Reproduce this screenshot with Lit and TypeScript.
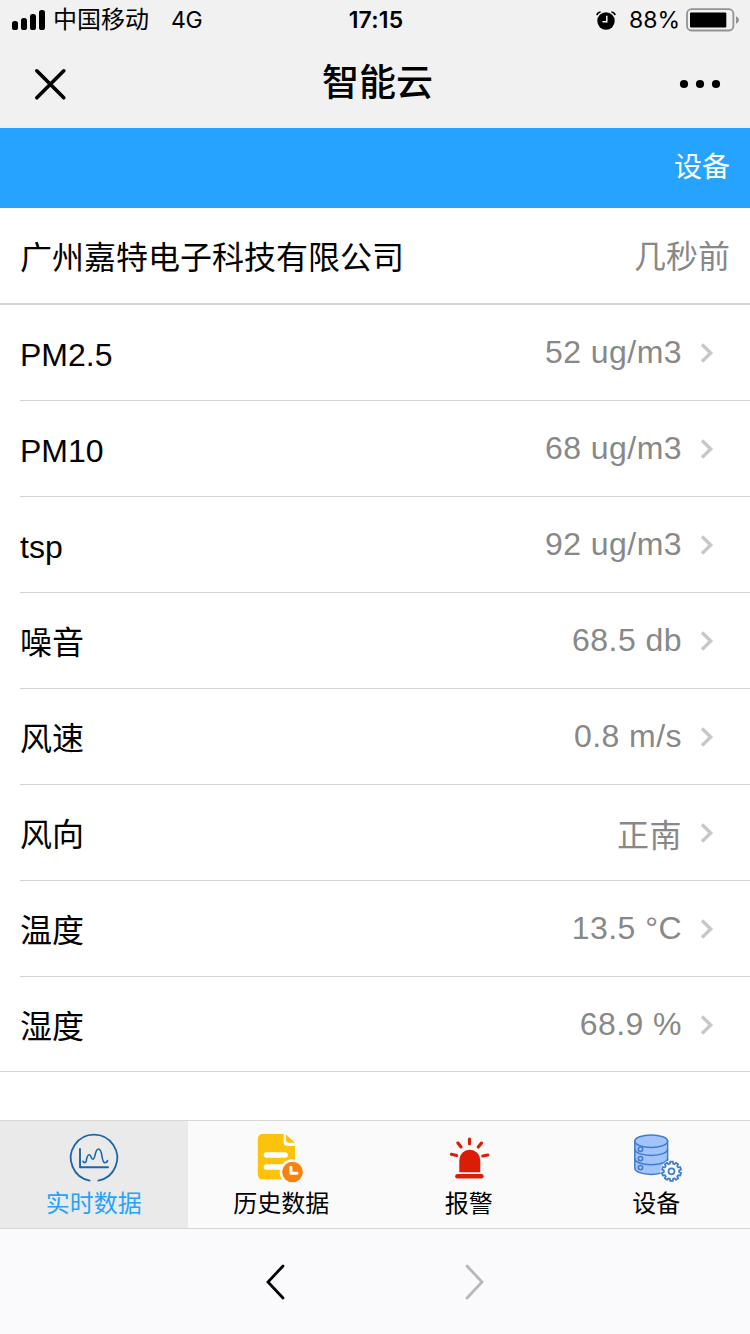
import { LitElement, html, css, svg } from "lit";
import { customElement, property } from "lit/decorators.js";
import { classMap } from "lit/directives/class-map.js";

const readings = [
  { name: "PM2.5", value: "52 ug/m3" },
  { name: "PM10", value: "68 ug/m3" },
  { name: "tsp", value: "92 ug/m3" },
  { name: "噪音", value: "68.5 db" },
  { name: "风速", value: "0.8 m/s" },
  { name: "风向", value: "正南" },
  { name: "温度", value: "13.5 °C" },
  { name: "湿度", value: "68.9 %" },
];

const gearPath = (() => {
  const teeth = 10;
  const points: string[] = [];
  for (let i = 0; i < teeth; i++) {
    const base = (i / teeth) * Math.PI * 2 - Math.PI / 2;
    for (const [offset, radius] of [[-0.2, 7.7], [-0.15, 9.7], [0.15, 9.7], [0.2, 7.7]]) {
      const a = base + offset;
      points.push(`${(39.5 + radius * Math.cos(a)).toFixed(2)} ${(39.5 + radius * Math.sin(a)).toFixed(2)}`);
    }
  }
  return `M${points.join("L")}Z`;
})();

const tabIcons = {
  chart: svg`
    <g fill="none" stroke="#1c66a8" stroke-linecap="round" stroke-linejoin="round">
      <path d="M19.7 46.6A23.2 23.2 0 1 1 28.3 46.6" stroke-width="1.8"/>
      <path d="M10 15V33.3H38" stroke-width="1.9"/>
      <path d="M13 27.2C13.2 29 15.6 29.2 16.2 27C17 23 17.2 20.7 19.2 20.7C21.4 20.7 20.8 25.3 22.8 25.3C25.6 25.3 24.6 15 28.6 15C33 15 30.9 28.7 35 28.7C36.5 28.7 37.3 27.7 37.5 26.6" stroke-width="1.6"/>
    </g>`,
  history: svg`
    <path d="M6 0H26.5V7.5Q26.5 12 31 12H38V40Q38 45.5 32.5 45.5H6Q.8 45.5.8 40V5.5Q.8 0 6 0Z" fill="#fdc20b"/>
    <path d="M29 .5L38 8.8H32Q29 8.8 29 6Z" fill="#fdc20b"/>
    <path d="M9.5 21H28M9.5 33H28" stroke="#fff" stroke-width="5.6" stroke-linecap="round"/>
    <circle cx="35.5" cy="38" r="12.8" fill="#fafafa"/>
    <circle cx="35.5" cy="38" r="10.3" fill="#f9820d"/>
    <path d="M33.9 33.3V39.3H40" fill="none" stroke="#fff" stroke-width="3" stroke-linecap="round" stroke-linejoin="round"/>`,
  alarm: svg`
    <path d="M14.3 38.2V26.2A10.5 10.5 0 0 1 35.3 26.2V38.2Z" fill="#db1d08"/>
    <path d="M12.4 42.2H36.4" stroke="#db1d08" stroke-width="4.5" stroke-linecap="round"/>
    <path d="M6.4 20.3L11.6 21.5M12.9 8.9L16 12.9M24.5 5V9.7M36.5 9.1L33.3 13M42.8 21L37.8 22" stroke="#db1d08" stroke-width="3.2" stroke-linecap="round"/>`,
  database: svg`
    <g fill="#a3c4fb" stroke="#3f7ccb" stroke-width="1.5">
      <path d="M2.8 7.2V34.3C2.8 37.8 10 40.4 19.3 40.4S35.6 37.8 35.6 34.3V7.2Z"/>
      <path d="M2.8 15.3C2.8 18.8 10 21.4 19.3 21.4S35.6 18.8 35.6 15.3" fill="none"/>
      <path d="M2.8 24.6C2.8 28.1 10 30.7 19.3 30.7S35.6 28.1 35.6 24.6" fill="none"/>
      <ellipse cx="19.2" cy="7.2" rx="16.4" ry="6.2"/>
      <circle cx="8.5" cy="15.3" r="2.2"/><circle cx="8.5" cy="24.6" r="2.2"/><circle cx="8.5" cy="33.6" r="2.2"/>
    </g>
    <circle cx="39.5" cy="37.3" r="11" fill="#fafafa"/>
    <g transform="translate(0 -2.2)" fill="#fafafa" stroke="#3f7ccb" stroke-width="1.7" stroke-linejoin="round">
      <path d=${gearPath}/><circle cx="39.5" cy="39.5" r="3"/>
    </g>`,
};

const tabs = [
  { label: "实时数据", icon: tabIcons.chart, active: true },
  { label: "历史数据", icon: tabIcons.history, active: false },
  { label: "报警", icon: tabIcons.alarm, active: false },
  { label: "设备", icon: tabIcons.database, active: false },
];

@customElement("status-bar")
class StatusBar extends LitElement {
  static styles = css`
    :host {
      display: grid;
      grid-template-columns: 1fr auto 1fr;
      align-items: center;
      height: 40px;
      padding: 0 10px 0 12px;
      font-family: Inter, "Noto Sans CJK SC", sans-serif;
      font-size: 23px;
      color: #000;
    }
    .side { display: flex; align-items: center; height: 40px; }
    .right { justify-content: flex-end; }
    .signal { margin-right: 7px; }
    .carrier { font-size: 24px; line-height: 40px; }
    .network { margin-left: 22px; line-height: 40px; letter-spacing: -0.4px; }
    .time { font-size: 23px; font-weight: 600; line-height: 40px; letter-spacing: 0.2px; }
    .alarm { margin-right: 13px; }
    .percent { margin-right: 6px; line-height: 40px; letter-spacing: 0; }
    svg { display: block; flex: none; }
  `;
  render() {
    return html`
      <div class="side">
        <svg class="signal" width="34" height="20" viewBox="0 0 34 20">
          <rect x="0" y="11" width="6" height="9" rx="2.6"/>
          <rect x="9" y="8" width="6" height="12" rx="2.6"/>
          <rect x="18" y="4" width="6" height="16" rx="2.6"/>
          <rect x="27" y="0" width="6" height="20" rx="2.6"/>
        </svg>
        <span class="carrier">中国移动</span><span class="network">4G</span>
      </div>
      <div class="time">17:15</div>
      <div class="side right">
        <svg class="alarm" width="20" height="19" viewBox="0 0 20 19">
          <circle cx="10" cy="10" r="8.7"/>
          <path d="M1 4.2Q1.4 1.3 4.6 1M19 4.2Q18.6 1.3 15.4 1" fill="none" stroke="#000" stroke-width="1.7"/>
          <path d="M10.8 4.7V10.8H6.5" fill="none" stroke="#f1f1f1" stroke-width="1.5"/>
        </svg>
        <span class="percent">88%</span>
        <svg width="54" height="24" viewBox="0 0 54 24">
          <rect x="1" y="1.2" width="46.4" height="21.3" rx="4.5" fill="none" stroke="#929292" stroke-width="1.8"/>
          <rect x="4" y="4.5" width="36.3" height="15" rx="1"/>
          <path d="M50 8.3Q53 9.5 53 12T50 15.9Z" fill="#929292"/>
        </svg>
      </div>`;
  }
}

@customElement("reading-row")
class ReadingRow extends LitElement {
  @property() name = "";
  @property() value = "";
  static styles = css`
    :host {
      display: flex;
      justify-content: space-between;
      box-sizing: border-box;
      height: 96px;
      margin-left: 20px;
      padding-right: 36px;
      border-bottom: 1px solid #d4d4d4;
    }
    :host(.last) { height: 95px; margin-left: 0; padding-left: 20px; }
    .name { line-height: 101px; }
    .value { display: flex; align-items: center; gap: 17px; height: 95px; color: #888; letter-spacing: 0.45px; }
    svg { display: block; }
  `;
  render() {
    return html`
      <span class="name">${this.name}</span>
      <span class="value">${this.value}
        <svg width="15" height="20" viewBox="0 0 15 20">
          <path d="M3 1.5L11.7 10L3 18.5" fill="none" stroke="#c7c7cc" stroke-width="3.4"/>
        </svg>
      </span>`;
  }
}

@customElement("app-root")
class AppRoot extends LitElement {
  static styles = css`
    :host {
      display: flex;
      flex-direction: column;
      width: 750px;
      height: 1334px;
      overflow: hidden;
      background: #fff;
      color: #000;
      font-family: "Liberation Sans", "Noto Sans CJK SC", sans-serif;
      font-size: 32px;
    }
    .top { height: 128px; background: #f1f1f1; flex: none; }
    .title-bar {
      display: grid;
      grid-template-columns: 1fr auto 1fr;
      align-items: center;
      height: 88px;
      padding: 0 29px 0 34px;
    }
    .title { font-size: 37px; font-weight: 500; line-height: 88px; }
    .more { justify-self: end; }
    .nav {
      flex: none;
      height: 80px;
      background: #26a2ff;
      color: #fff;
      font-size: 28px;
      line-height: 80px;
      text-align: right;
      padding-right: 20px;
    }
    .company {
      flex: none;
      display: flex;
      justify-content: space-between;
      height: 95px;
      padding: 0 20px;
      border-bottom: 2px solid #d4d4d4;
    }
    .company-name { line-height: 101px; }
    .ago { line-height: 98px; color: #888; }
    .readings { flex: 1; }
    .tabs {
      flex: none;
      display: grid;
      grid-template-columns: repeat(4, 1fr);
      height: 107px;
      border-top: 1px solid #d6d6d6;
      border-bottom: 1px solid #d6d6d6;
      background: #fafafa;
    }
    .tab { display: flex; flex-direction: column; align-items: center; padding-top: 13px; font-size: 24px; }
    .tab.active { background: #eaeaea; color: #26a2ff; }
    .label { line-height: 34px; margin-top: 5px; }
    .browser-bar {
      flex: none;
      display: flex;
      justify-content: center;
      align-items: center;
      gap: 176px;
      height: 105px;
      background: #fafafc;
    }
    svg { display: block; overflow: visible; }
  `;
  render() {
    return html`
      <header class="top">
        <status-bar></status-bar>
        <div class="title-bar">
          <svg width="33" height="33" viewBox="0 0 33 33">
            <path d="M2.8 2.8L29.8 29.8M29.8 2.8L2.8 29.8" stroke="#000" stroke-width="3.6" stroke-linecap="round"/>
          </svg>
          <span class="title">智能云</span>
          <svg class="more" width="42" height="10" viewBox="0 0 42 10">
            <circle cx="5" cy="5" r="4.1"/><circle cx="21" cy="5" r="4.1"/><circle cx="37" cy="5" r="4.1"/>
          </svg>
        </div>
      </header>
      <nav class="nav">设备</nav>
      <section class="company">
        <span class="company-name">广州嘉特电子科技有限公司</span>
        <span class="ago">几秒前</span>
      </section>
      <main class="readings">
        ${readings.map((r, i) => html`
          <reading-row class=${classMap({ last: i === readings.length - 1 })} .name=${r.name} .value=${r.value}></reading-row>`)}
      </main>
      <nav class="tabs">
        ${tabs.map((t) => html`
          <div class=${classMap({ tab: true, active: t.active })}>
            <svg width="48" height="48" viewBox="0 0 48 48">${t.icon}</svg>
            <span class="label">${t.label}</span>
          </div>`)}
      </nav>
      <footer class="browser-bar">
        <svg width="22" height="36" viewBox="0 0 22 36">
          <path d="M18 2L3 18L18 34" fill="none" stroke="#000" stroke-width="2.8" stroke-linecap="round"/>
        </svg>
        <svg width="22" height="36" viewBox="0 0 22 36">
          <path d="M4 2L19 18L4 34" fill="none" stroke="#b8b8ba" stroke-width="2.8" stroke-linecap="round"/>
        </svg>
      </footer>`;
  }
}
